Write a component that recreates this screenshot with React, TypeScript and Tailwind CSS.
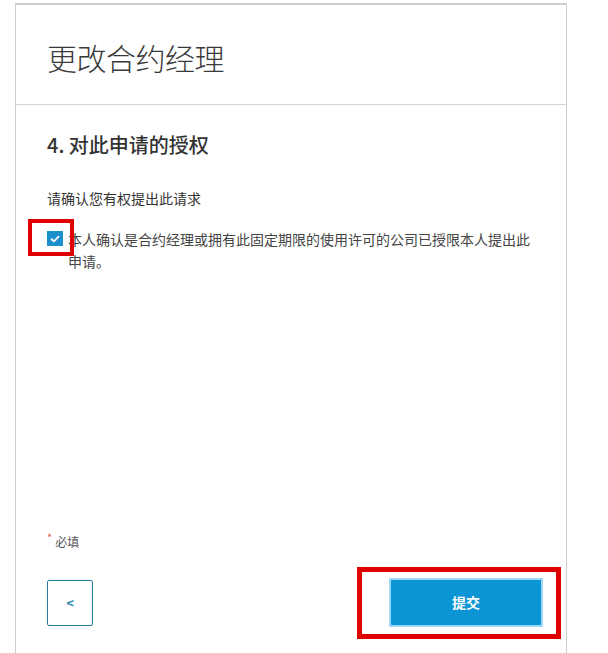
import React, { useState } from 'react';

const font = { fontFamily: '"Noto Sans CJK SC", "Noto Sans", sans-serif' };

export default function App() {
  const [checked, setChecked] = useState(true);

  return (
    <div className="w-[608px] h-[653px] bg-white overflow-hidden pt-[3px] pl-[15px]" style={font}>
      <div className="w-[552px] h-full flex flex-col border-t-2 border-l border-r border-[#cdcdcd]">
        <div className="h-[100px] shrink-0 flex items-center pl-[31px] pt-[4px] border-b border-[#d6d6d6]">
          <h1 className="text-[30px] font-light text-[#3a3a3a] leading-none tracking-[-0.5px]">更改合约经理</h1>
        </div>

        <div className="flex-1 flex flex-col pl-[31px] pr-[32px]">
          <h2 className="mt-[26px] text-[20px] font-medium text-[#333] leading-[28px]">4. 对此申请的授权</h2>

          <p className="mt-[29px] text-[14px] text-[#333] leading-[20px]">请确认您有权提出此请求</p>

          <label className="mt-[20px] flex items-start cursor-pointer">
            <span className="relative shrink-0">
              <input
                type="checkbox"
                checked={checked}
                onChange={() => setChecked(!checked)}
                className="sr-only"
              />
              <span
                className={`mt-[3px] w-[16px] h-[15px] flex items-center justify-center ${
                  checked ? 'bg-[#1b8fcb]' : 'bg-white border border-[#999]'
                }`}
              >
                {checked && (
                  <svg width="10" height="8" viewBox="0 0 10 8" fill="none">
                    <path d="M1.5 4.2 L3.9 6.3 L8.6 1.6" stroke="white" strokeWidth="1.8" strokeLinecap="round" strokeLinejoin="round" />
                  </svg>
                )}
              </span>
              <span className="absolute left-[-19px] top-[-9px] w-[46px] h-[37px] border-4 border-[#e00000] pointer-events-none" />
            </span>
            <span className="ml-[5px] text-[14px] text-[#444] leading-[22px]">
              本人确认是合约经理或拥有此固定期限的使用许可的公司已授限本人提出此申请。
            </span>
          </label>

          <div className="flex-1" />

          <div className="flex items-start text-[12px] text-[#555] leading-none">
            <span className="text-[#e05a50] text-[11px] mr-[3px] -mt-[4px]">*</span>
            <span>必填</span>
          </div>

          <div className="mt-[19px] mb-[14px] flex items-center justify-between">
            <button className="w-[46px] h-[46px] border border-[#2a7f9f] rounded-[2px] flex items-center justify-center text-[#2b8ab8] text-[13px] font-bold">
              &lt;
            </button>
            <div className="-mr-[27px] border-[5px] border-[#e00000] pt-[6px] pb-[7px] pl-[27px] pr-[13px]">
              <button className="block w-[154px] h-[49px] bg-[#0b95d4] rounded-[3px] ring-2 ring-inset ring-[#9fd8f5] text-white text-[14px] font-bold">
                提交
              </button>
            </div>
          </div>
        </div>
      </div>
    </div>
  );
}
